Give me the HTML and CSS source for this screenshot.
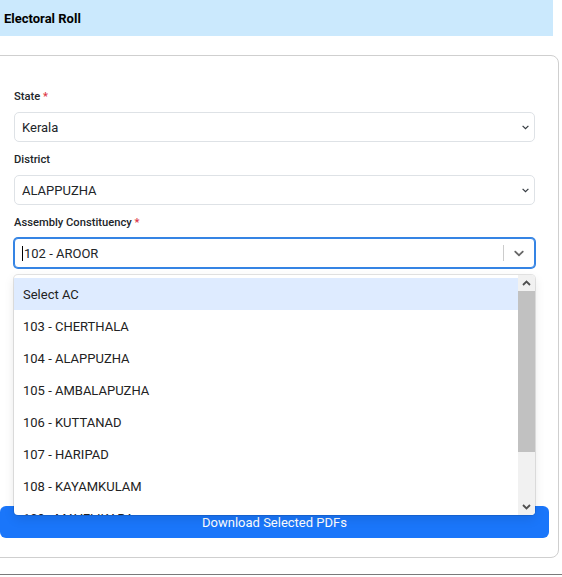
FILE: index.html
```html
<!DOCTYPE html>
<html lang="en">
<head>
    <meta charset="UTF-8">
    <meta name="viewport" content="width=device-width, initial-scale=1.0">
    <title>Electoral Roll</title>
    <link rel="stylesheet" href="styles.css">
</head>
<body>
    <div class="topbar">
        <h1>Electoral Roll</h1>
    </div>

    <div class="card">
        <form id="rollForm">
            <div class="form-group">
                <label for="state">State <span class="req">*</span></label>
                <div class="select-wrap">
                    <select id="state" name="state">
                        <option>Kerala</option>
                    </select>
                    <svg class="caret" viewBox="0 0 7 5"><polyline points="0.6,0.8 3.5,3.7 6.4,0.8" fill="none" stroke="#343a40" stroke-width="1.2"/></svg>
                </div>
            </div>

            <div class="form-group">
                <label for="district">District</label>
                <div class="select-wrap">
                    <select id="district" name="district">
                        <option>ALAPPUZHA</option>
                    </select>
                    <svg class="caret" viewBox="0 0 7 5"><polyline points="0.6,0.8 3.5,3.7 6.4,0.8" fill="none" stroke="#343a40" stroke-width="1.2"/></svg>
                </div>
            </div>

            <div class="form-group">
                <label>Assembly Constituency <span class="req">*</span></label>
                <div class="ac-field">
                    <div class="ac-control">
                        <div class="ac-value"><span class="cursor"></span>102 - AROOR</div>
                        <span class="ac-sep"></span>
                        <div class="ac-indicator">
                            <svg viewBox="0 0 20 20" width="16" height="16"><path fill="#666" d="M4.516 7.548c0.436-0.446 1.043-0.481 1.576 0l3.908 3.747 3.908-3.747c0.533-0.481 1.141-0.446 1.574 0 0.436 0.445 0.408 1.197 0 1.615-0.406 0.418-4.695 4.502-4.695 4.502-0.217 0.223-0.502 0.335-0.787 0.335s-0.57-0.112-0.789-0.335c0 0-4.287-4.084-4.695-4.502s-0.436-1.17 0-1.615z"/></svg>
                        </div>
                    </div>

                    <!-- open menu -->
                    <div class="ac-menu">
                        <ul class="ac-options">
                            <li class="focused">Select AC</li>
                            <li>103 - CHERTHALA</li>
                            <li>104 - ALAPPUZHA</li>
                            <li>105 - AMBALAPUZHA</li>
                            <li>106 - KUTTANAD</li>
                            <li>107 - HARIPAD</li>
                            <li>108 - KAYAMKULAM</li>
                            <li>109 - MAVELIKARA</li>
                        </ul>
                        <div class="scrollbar">
                            <div class="sb-btn">
                                <svg viewBox="0 0 9 6" width="9" height="6"><polyline points="1,5 4.5,1.5 8,5" fill="none" stroke="#505050" stroke-width="1.8"/></svg>
                            </div>
                            <div class="sb-thumb"></div>
                            <div class="sb-track"></div>
                            <div class="sb-btn">
                                <svg viewBox="0 0 9 6" width="9" height="6"><polyline points="1,1 4.5,4.5 8,1" fill="none" stroke="#505050" stroke-width="1.8"/></svg>
                            </div>
                        </div>
                    </div>
                </div>
            </div>

            <div class="parts-list"></div>

            <button type="submit" class="btn-download">Download Selected PDFs</button>
        </form>
    </div>

    <div class="next-section"></div>
</body>
</html>
```

FILE: styles.css
```css
:root {
    --text-color: #212529;
    --border-color: #dee2e6;
    --focus-color: #3584e4;
    --primary: #1a76fa;
    --option-hover: #deebff;
}

body {
    margin: 0;
    font-family: Roboto, 'Liberation Sans', Arial, sans-serif;
    color: var(--text-color);
    background-color: #fff;
    overflow: hidden;
}
.topbar {
    height: 36px;
    margin-right: 9px;
    padding-left: 4px;
    background-color: #cbe9fd;
    display: flex;
    align-items: center;
}
.topbar h1 {
    margin: 0;
    font-size: 13px;
    font-weight: 700;
    color: #000;
}
.card {
    margin: 19px 3px 0 -10px;
    padding: 33px 23px 19px;
    border: 1px solid #cfcfcf;
    border-radius: 8px;
}
.form-group {
    margin-bottom: 10px;
}
.form-group label {
    display: block;
    font-size: 11.2px;
    line-height: 16px;
    font-weight: 500;
    margin-bottom: 7px;
}
.req {
    color: #dc3545;
}
.select-wrap {
    position: relative;
}
.select-wrap select {
    -webkit-appearance: none;
    appearance: none;
    display: block;
    width: 100%;
    height: 30px;
    padding: 0 20px 0 7px;
    border: 1px solid var(--border-color);
    border-radius: 5px;
    background-color: #fff;
    font-family: inherit;
    font-size: 13px;
    color: var(--text-color);
}
.select-wrap .caret {
    position: absolute;
    right: 6px;
    top: 13px;
    width: 7px;
    height: 5px;
    pointer-events: none;
}
.ac-field {
    position: relative;
}
.ac-control {
    display: flex;
    align-items: center;
    height: 30px;
    box-sizing: border-box;
    border: 1px solid var(--focus-color);
    box-shadow: 0 0 0 1px var(--focus-color);
    border-radius: 4px;
    background-color: #fff;
}
.ac-value {
    flex: 1;
    display: flex;
    align-items: center;
    padding-left: 7px;
    font-size: 13px;
}
.cursor {
    display: inline-block;
    width: 0;
    height: 15px;
    border-left: 1px solid #000;
    margin-right: 1px;
}
.ac-sep {
    width: 1px;
    height: 16px;
    background-color: #ccc;
}
.ac-indicator {
    width: 30px;
    display: flex;
    justify-content: center;
    align-items: center;
}
.ac-menu {
    position: absolute;
    top: calc(100% + 7px);
    left: 0;
    right: 0;
    height: 240px;
    display: flex;
    background-color: #fff;
    border-radius: 4px;
    box-shadow: 0 0 0 1px rgba(0, 0, 0, 0.1), 0 4px 11px rgba(0, 0, 0, 0.1);
    overflow: hidden;
    z-index: 5;
}
.ac-options {
    flex: 1;
    list-style: none;
    margin: 0;
    padding: 3px 0 0;
    overflow: hidden;
}
.ac-options li {
    height: 32px;
    line-height: 34px;
    padding-left: 9px;
    font-size: 13px;
    color: #222;
}
.ac-options li.focused {
    background-color: var(--option-hover);
}
.scrollbar {
    width: 17px;
    display: flex;
    flex-direction: column;
    background-color: #f1f1f1;
}
.sb-btn {
    height: 16px;
    display: flex;
    justify-content: center;
    align-items: center;
}
.sb-thumb {
    height: 161px;
    background-color: #c1c1c1;
}
.sb-track {
    flex: 1;
}
.parts-list {
    min-height: 228px;
}
.btn-download {
    display: block;
    width: calc(100% + 28px);
    height: 32px;
    margin: 0 -14px;
    border: none;
    border-radius: 6px;
    background-color: var(--primary);
    color: #fff;
    font-family: inherit;
    font-size: 13px;
    cursor: pointer;
}
.next-section {
    margin-top: 16px;
    border-top: 1px solid #7a7a7a;
}
```
